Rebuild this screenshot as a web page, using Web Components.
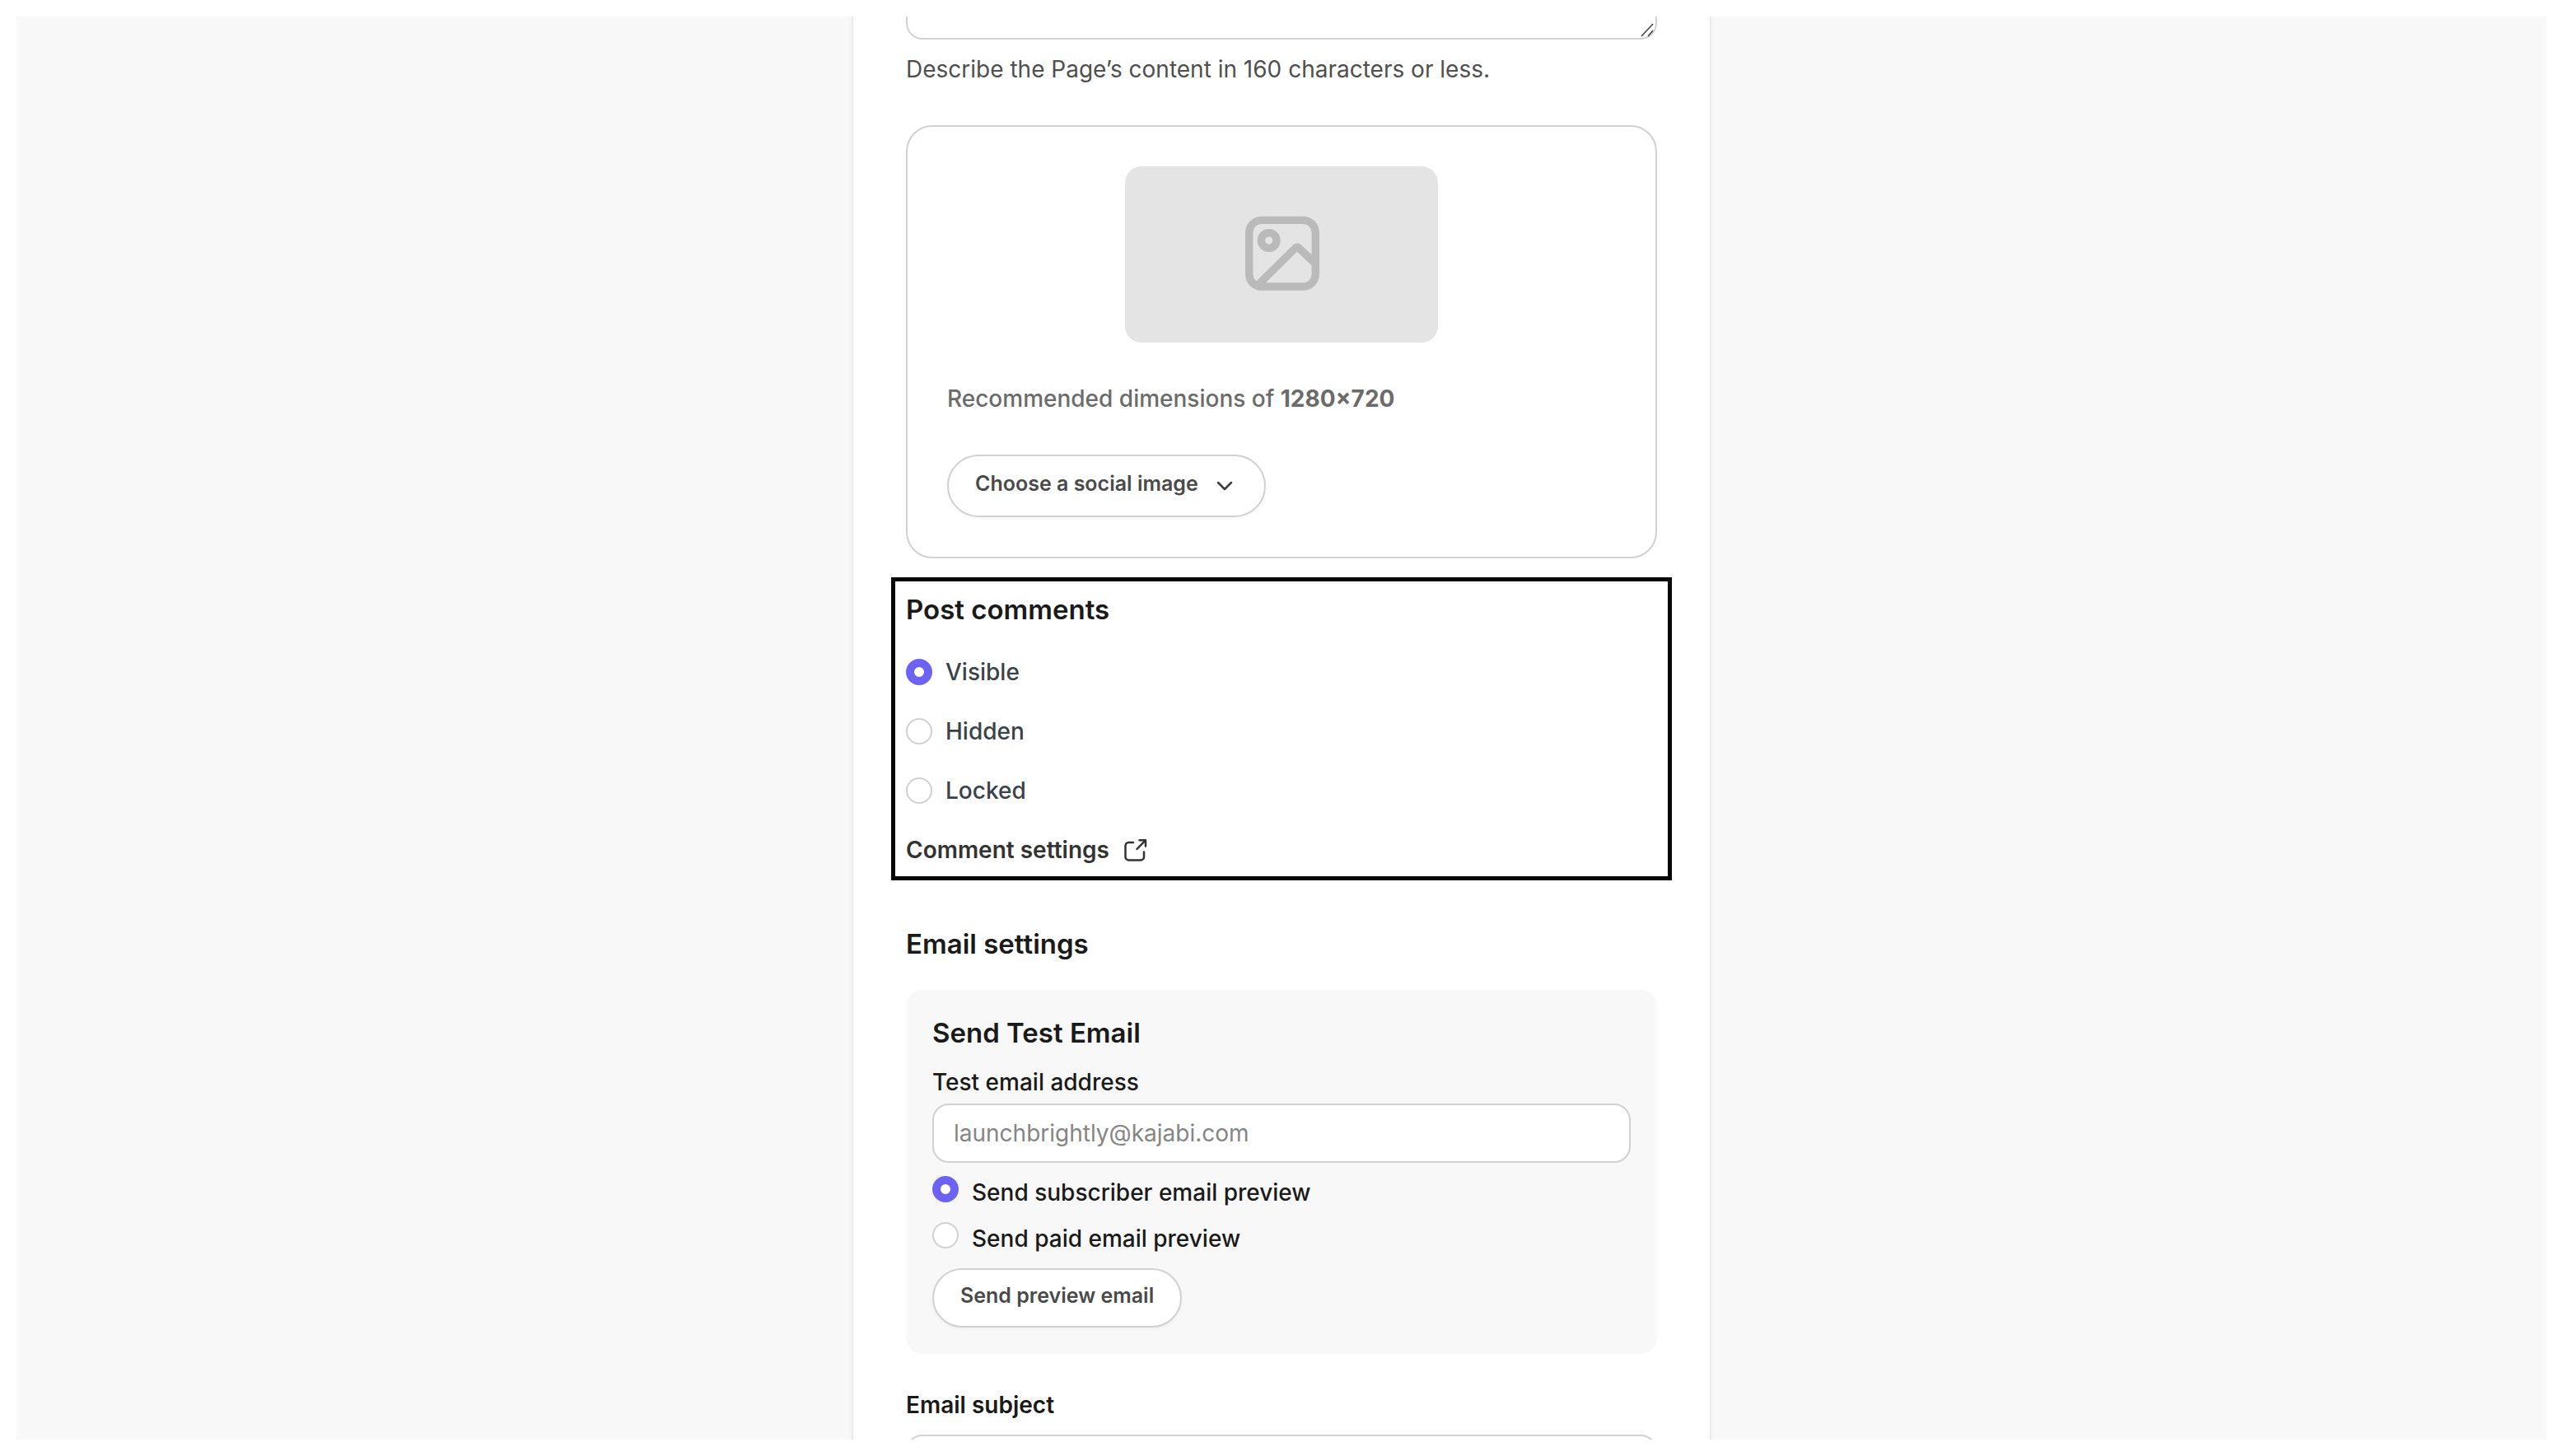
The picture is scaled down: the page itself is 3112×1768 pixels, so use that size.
<!DOCTYPE html>
<html lang="en">
<head>
<meta charset="utf-8">
<title>Post settings</title>
<style>
  body {
    margin: 0;
    background: #fff;
    color: #1a1a1a;
    font-family: Inter, "Liberation Sans", sans-serif;
    font-size: 28px;
    line-height: 40px;
    --line: #d1d1d1;
    --surface: #f8f8f8;
    --accent: #6e62f2;
  }
</style>
</head>
<body>
<settings-page>
  <text-area-field hint="Describe the Page’s content in 160 characters or less."></text-area-field>
  <social-image-card></social-image-card>
  <post-comments></post-comments>
  <email-settings></email-settings>
  <text-field class="subject" label="Email subject" strong></text-field>
</settings-page>

<script>
class SettingsPage extends HTMLElement
{
  constructor ()
  {
    super()
    this.attachShadow({ mode: 'open' }).innerHTML = `
      <style>
        :host {
          display: flex;
          justify-content: center;
          box-sizing: border-box;
          height: 100vh;
          padding: 20px;
        }

        .backdrop {
          flex: 1;
          display: flex;
          justify-content: center;
          overflow: hidden;
          background: var(--surface);
        }

        main {
          box-sizing: border-box;
          flex: 0 1 1040px;
          min-height: 100%;
          height: max-content;
          padding: 0 64px;
          background: #fff;
          box-shadow: 0 0 2px 1px rgba(0, 0, 0, 0.08), 0 0 8px rgba(0, 0, 0, 0.05);
        }

        ::slotted(.subject) {
          margin-top: 42px;
        }
      </style>
      <div class="backdrop"><main><slot></slot></main></div>
    `
  }
}

class TextAreaField extends HTMLElement
{
  constructor ()
  {
    super()
    this.attachShadow({ mode: 'open' })
  }

  connectedCallback ()
  {
    this.shadowRoot.innerHTML = `
      <style>
        :host {
          display: block;
          color: #4f4f4f;
        }

        .box {
          position: relative;
          display: flex;
        }

        textarea {
          box-sizing: border-box;
          flex: 1;
          height: 28px;
          margin: 0;
          padding: 0 24px;
          border: 2px solid var(--line);
          border-top: 0;
          border-radius: 0 0 20px 20px;
          outline: 0;
          overflow: hidden;
          resize: none;
          background: #fff;
          font: inherit;
        }

        .grip {
          position: absolute;
          right: 2px;
          bottom: 2px;
          width: 18px;
          height: 18px;
        }

        p {
          margin: 16px 0 0;
        }
      </style>
      <div class="box">
        <textarea aria-describedby="hint" aria-label="Page description"></textarea>
        <svg class="grip" viewBox="0 0 18 18" fill="none" stroke="#444" stroke-width="1.6">
          <path d="M1 16L15 1M9 16L15 9" />
        </svg>
      </div>
      <p id="hint">${this.getAttribute('hint')}</p>
    `
  }
}

class PillButton extends HTMLElement
{
  constructor ()
  {
    super()
    this.attachShadow({ mode: 'open' }).innerHTML = `
      <style>
        :host {
          display: flex;
        }

        button {
          box-sizing: border-box;
          display: flex;
          align-items: center;
          gap: 16px;
          min-height: var(--pill-height, 72px);
          margin: 0;
          padding: 0 32px;
          border: 2px solid var(--line);
          border-radius: 38px;
          background: #fff;
          box-shadow: 0 2px 4px rgba(0, 0, 0, 0.04);
          color: #4a4a4a;
          font: 600 25px/36px Inter, "Liberation Sans", sans-serif;
          cursor: pointer;
        }

        .text {
          padding-bottom: 6px;
        }
      </style>
      <button type="button"><span class="text"><slot></slot></span><slot name="icon"></slot></button>
    `
  }
}

class SocialImageCard extends HTMLElement
{
  constructor ()
  {
    super()
    this.attachShadow({ mode: 'open' }).innerHTML = `
      <style>
        :host {
          display: block;
          margin-top: 48px;
          padding: 48px;
          border: 2px solid var(--line);
          border-radius: 32px;
        }

        .preview {
          display: flex;
          align-items: center;
          justify-content: center;
          width: 380px;
          height: 214px;
          margin: 0 auto;
          border-radius: 20px;
          background: #e4e4e4;
        }

        .preview svg {
          width: 96px;
          height: 96px;
        }

        p {
          margin: 48px 0;
          color: #6b6b6b;
          font-weight: 500;
        }

        strong {
          font-weight: 700;
        }

        pill-button {
          --pill-height: 76px;
        }

        .chevron {
          width: 32px;
          height: 32px;
        }
      </style>
      <div class="preview">
        <svg viewBox="0 0 96 96" fill="none" stroke="#bababa" stroke-width="9.400" stroke-linejoin="round">
          <rect x="8.700" y="6.400" width="80.600" height="80.600" rx="15" />
          <circle cx="32.700" cy="31" r="9.300" />
          <path d="M18 86.300L64 41Q67 37.500 70 41L88 58" />
        </svg>
      </div>
      <p>Recommended dimensions of <strong>1280×720</strong></p>
      <pill-button>Choose a social image<svg slot="icon" class="chevron" viewBox="0 0 32 32" fill="none" stroke="#3d3d3d" stroke-width="2.500" stroke-linecap="round" stroke-linejoin="round"><path d="M8 12l8 8 8-8" /></svg></pill-button>
    `
  }
}

class RadioList extends HTMLElement
{
  constructor ()
  {
    super()
    this.attachShadow({ mode: 'open' })
  }

  connectedCallback ()
  {
    const name = this.getAttribute('name')
    const options = this.getAttribute('options').split(',')

    this.shadowRoot.innerHTML = `
      <style>
        :host {
          display: flex;
          flex-direction: column;
          align-items: flex-start;
          gap: 16px;
          font-weight: 500;
        }

        label {
          display: flex;
          align-items: var(--radio-align, flex-start);
          gap: 16px;
        }

        input {
          appearance: none;
          box-sizing: border-box;
          width: 32px;
          height: 32px;
          margin: 0;
          border: 2px solid var(--line);
          border-radius: 50%;
          background: #fff;
        }

        input:checked {
          border: 10px solid var(--accent);
        }
      </style>
      ${options.map((text, i) => `
        <label><input type="radio" name="${name}" ${i === 0 ? 'checked' : ''}>${text}</label>
      `).join('')}
    `
  }
}

class PostComments extends HTMLElement
{
  constructor ()
  {
    super()
    this.attachShadow({ mode: 'open' }).innerHTML = `
      <style>
        :host {
          display: flex;
          flex-direction: column;
          align-items: flex-start;
          gap: 32px;
          margin: 23px -18px 0;
          padding: 10px 13px 12px;
          border: 5px solid #080808;
        }

        h2 {
          margin: 0;
          font-size: 33px;
          font-weight: 600;
          line-height: 48px;
        }

        radio-list {
          gap: 32px;
          color: #3a424b;
          --radio-align: center;
        }

        a {
          display: flex;
          align-items: center;
          gap: 16px;
          color: #333;
          font-weight: 600;
          text-decoration: none;
        }

        svg {
          width: 32px;
          height: 32px;
        }
      </style>
      <h2>Post comments</h2>
      <radio-list name="comments" options="Visible,Hidden,Locked"></radio-list>
      <a href="#">Comment settings
        <svg viewBox="0 0 32 32" fill="none" stroke="#333" stroke-width="2.500" stroke-linecap="round" stroke-linejoin="round">
          <path d="M13 7H7.500a4 4 0 0 0-4 4V24.400a4 4 0 0 0 4 4H22a4 4 0 0 0 4-4V18.500M20.500 4.200H28V11.500M28 4.200L17.500 15" />
        </svg>
      </a>
    `
  }
}

class TextField extends HTMLElement
{
  constructor ()
  {
    super()
    this.attachShadow({ mode: 'open' })
  }

  connectedCallback ()
  {
    this.shadowRoot.innerHTML = `
      <style>
        :host {
          display: flex;
          flex-direction: column;
          gap: 6px;
          font-weight: 500;
        }

        :host([strong]) {
          gap: 16px;
          font-weight: 600;
        }

        input {
          box-sizing: border-box;
          width: 100%;
          height: 72px;
          margin: 0;
          padding: 0 24px;
          border: 2px solid var(--line);
          border-radius: 20px;
          background: #fff;
          color: inherit;
          font: inherit;
          font-weight: 400;
        }

        input::placeholder {
          color: #858585;
          opacity: 1;
        }
      </style>
      <label for="field">${this.getAttribute('label')}</label>
      <input id="field" type="text" placeholder="${this.getAttribute('placeholder') || ''}">
    `
  }
}

class EmailSettings extends HTMLElement
{
  constructor ()
  {
    super()
    this.attachShadow({ mode: 'open' }).innerHTML = `
      <style>
        :host {
          display: block;
          margin-top: 53px;
        }

        h2, h3 {
          margin: 0;
          font-size: 33px;
          font-weight: 600;
          line-height: 48px;
        }

        h3 {
          margin-bottom: 4px;
          line-height: 40px;
        }

        .panel {
          display: flex;
          flex-direction: column;
          gap: 16px;
          margin-top: 32px;
          padding: 32px;
          border-radius: 20px;
          background: var(--surface);
        }
      </style>
      <h2>Email settings</h2>
      <div class="panel">
        <h3>Send Test Email</h3>
        <text-field label="Test email address" placeholder="launchbrightly@kajabi.com"></text-field>
        <radio-list name="preview" options="Send subscriber email preview,Send paid email preview"></radio-list>
        <pill-button>Send preview email</pill-button>
      </div>
    `
  }
}

customElements.define('settings-page', SettingsPage)
customElements.define('text-area-field', TextAreaField)
customElements.define('pill-button', PillButton)
customElements.define('social-image-card', SocialImageCard)
customElements.define('radio-list', RadioList)
customElements.define('post-comments', PostComments)
customElements.define('text-field', TextField)
customElements.define('email-settings', EmailSettings)
</script>
</body>
</html>
